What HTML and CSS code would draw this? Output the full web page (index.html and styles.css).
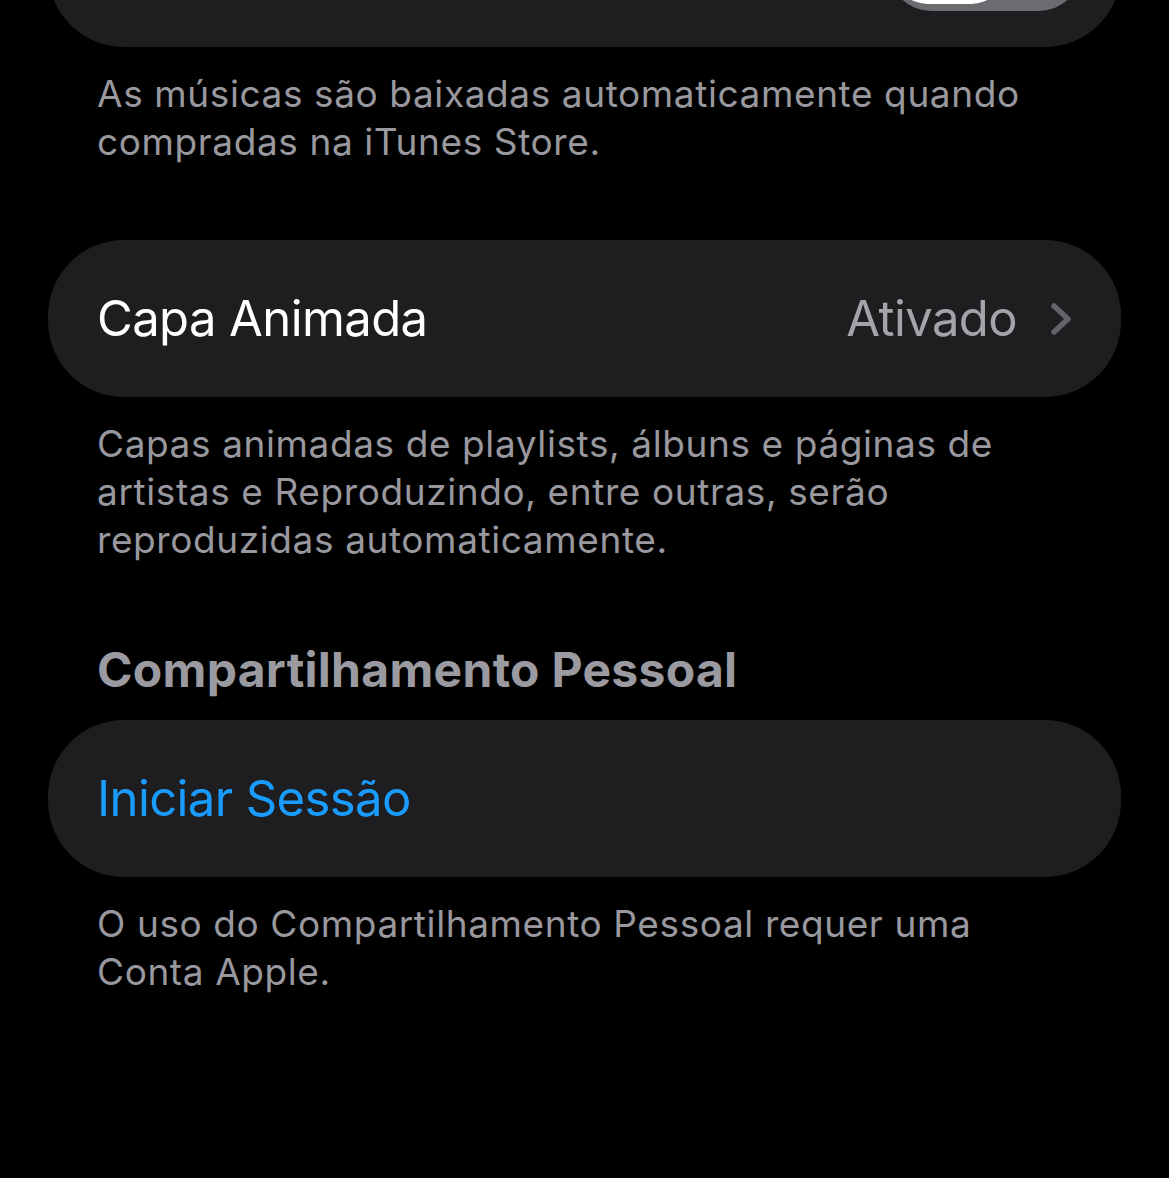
FILE: index.html
```html
<!DOCTYPE html>
<html lang="pt-BR">
<head>
<meta charset="UTF-8">
<meta name="viewport" content="width=device-width, initial-scale=1.0">
<title>Música</title>
<link rel="stylesheet" href="styles.css">
</head>
<body>
  <div class="settings">

    <div class="card card-top">
      <div class="toggle">
        <div class="knob"></div>
      </div>
    </div>
    <p class="footer">As músicas são baixadas automaticamente quando compradas na iTunes Store.</p>

    <div class="card card-gap">
      <span class="row-label">Capa Animada</span>
      <div class="row-value">
        <span>Ativado</span>
        <svg class="chevron" width="22" height="34" viewBox="0 0 22 34">
          <path d="M4 4 L18 17 L4 30" fill="none" stroke="#636368" stroke-width="5.5" stroke-linecap="round" stroke-linejoin="round"/>
        </svg>
      </div>
    </div>
    <p class="footer">Capas animadas de playlists, álbuns e páginas de artistas e Reproduzindo, entre outras, serão reproduzidas automaticamente.</p>

    <h2 class="section-title">Compartilhamento Pessoal</h2>
    <div class="card">
      <span class="row-label link">Iniciar Sessão</span>
    </div>
    <p class="footer">O uso do Compartilhamento Pessoal requer uma Conta Apple.</p>

  </div>
</body>
</html>
```

FILE: styles.css
```css
body {
  margin: 0;
  background-color: #000000;
  font-family: Inter, "Noto Sans", sans-serif;
  color: #ffffff;
}

.settings {
  padding: 0 48px;
  display: flex;
  flex-direction: column;
}

.card {
  height: 157px;
  background-color: #1e1e21;
  border-radius: 76px;
  padding: 0 49px;
  display: flex;
  align-items: center;
  justify-content: space-between;
  box-sizing: border-box;
}

/* only the bottom of the first card is on screen */
.card-top {
  margin-top: -110px;
  padding-right: 40px;
  justify-content: flex-end;
}

.card-gap {
  margin-top: 74px;
}

.row-label {
  font-size: 49px;
  letter-spacing: -0.6px;
}

.row-label.link {
  color: #1a9cff;
}

.row-value {
  display: flex;
  align-items: center;
  gap: 33px;
  font-size: 49px;
  letter-spacing: -0.6px;
  color: #a3a3a8;
}

.chevron {
  display: block;
}

.toggle {
  width: 192px;
  height: 84px;
  border-radius: 42px;
  background-color: #6b6b70;
  padding: 7px 4px;
  box-sizing: border-box;
}

.knob {
  width: 113px;
  height: 70px;
  border-radius: 35px;
  background-color: #ffffff;
}

.footer {
  margin: 23px 0 0;
  padding: 0 49px;
  font-size: 37px;
  line-height: 48px;
  letter-spacing: 0.6px;
  color: #98989e;
}

.section-title {
  margin: 78px 0 0;
  padding: 0 49px;
  font-size: 48px;
  line-height: 56px;
  font-weight: 700;
  letter-spacing: 0.3px;
  color: #9a9aa0;
}

.section-title + .card {
  margin-top: 22px;
}
```
